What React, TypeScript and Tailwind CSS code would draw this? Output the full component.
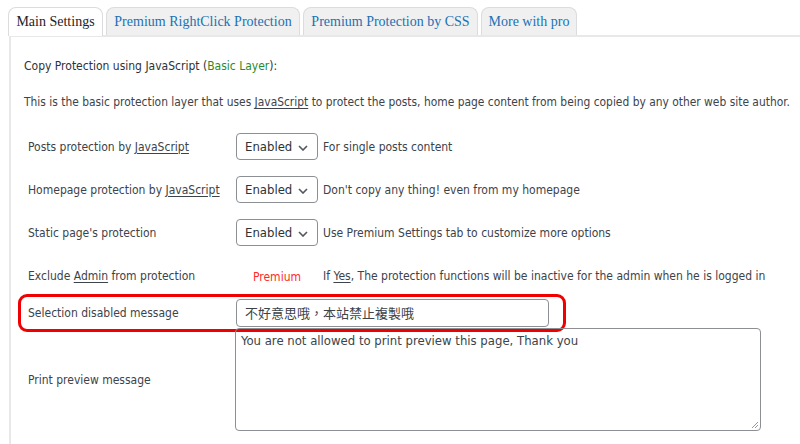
import React from "react";

const sans = { fontFamily: '"DejaVu Sans Condensed", "DejaVu Sans", sans-serif' };
const serif = { fontFamily: '"Liberation Serif", "DejaVu Serif", serif' };

function Chevron() {
  return (
    <svg width="10" height="6" viewBox="0 0 10 6" className="absolute right-[9px] top-[11px]">
      <path d="M1 1 L5 5 L9 1" fill="none" stroke="#50575e" strokeWidth="1.6" />
    </svg>
  );
}

function Select() {
  return (
    <div className="relative shrink-0 w-[82px] h-[27px] border border-[#8c8f94] rounded-[4px] bg-white text-[13px] text-[#2c3338] pl-[8px] leading-[25px]">
      Enabled
      <Chevron />
    </div>
  );
}

function U({ children }: { children: React.ReactNode }) {
  return <span className="underline underline-offset-2">{children}</span>;
}

export default function App() {
  return (
    <div className="w-[800px] h-[444px] bg-white overflow-hidden text-[#3c434a]" style={sans}>
      <div className="flex pl-[8px] pt-[7px] gap-[3px] items-end">
        <div className="w-[95px] h-[29px] text-center whitespace-nowrap border border-[#dcdcde] border-b-0 rounded-t-[8px] bg-white text-[14px] text-[#1d2327] leading-[27px] relative z-10 -mb-px" style={serif}>
          Main Settings
        </div>
        {[
          ["Premium RightClick Protection", "w-[194px]"],
          ["Premium Protection by CSS", "w-[175px]"],
          ["More with pro", "w-[96px]"],
        ].map(([t, w]) => (
          <div key={t} className={`${w} h-[28px] text-center whitespace-nowrap border border-[#dcdcde] border-b-0 rounded-t-[8px] bg-[#f0f0f1] text-[14px] text-[#2271b1] leading-[27px]`} style={serif}>
            {t}
          </div>
        ))}
      </div>
      <div className="ml-[9px] border-l-[2px] border-t-[2px] border-[#e8e8e8] h-[420px] pl-[13px] pt-[20px]">
        <div className="text-[12px] leading-[18px] text-[#2c3338]">
          Copy Protection using JavaScript (<span className="text-[#2a8a2a]">Basic Layer</span>):
        </div>
        <div className="text-[11.9px] leading-[18px] mt-[18px] whitespace-nowrap">
          This is the basic protection layer that uses <U>JavaScript</U> to protect the posts, home page content from being copied by any other web site author.
        </div>
        <div className="mt-[14px] flex flex-col text-[12px]">
          <div className="flex items-center h-[43px]">
            <div className="w-[212px] pl-[4px]">Posts protection by <U>JavaScript</U></div>
            <Select />
            <div className="ml-[5px]">For single posts content</div>
          </div>
          <div className="flex items-center h-[43px]">
            <div className="w-[212px] pl-[4px]">Homepage protection by <U>JavaScript</U></div>
            <Select />
            <div className="ml-[5px]">Don't copy any thing! even from my homepage</div>
          </div>
          <div className="flex items-center h-[43px]">
            <div className="w-[212px] pl-[4px]">Static page's protection</div>
            <Select />
            <div className="ml-[5px]">Use Premium Settings tab to customize more options</div>
          </div>
          <div className="flex items-center h-[41px] pt-[3px]">
            <div className="w-[212px] pl-[4px]">Exclude <U>Admin</U> from protection</div>
            <div className="w-[82px] text-center text-[#ff2a2a] pt-[2px]">Premium</div>
            <div className="ml-[5px] whitespace-nowrap">If <U>Yes</U>, The protection functions will be inactive for the admin when he is logged in</div>
          </div>
          <div className="relative flex items-center h-[35px]">
            <div className="absolute left-[-6px] top-[-1px] w-[548px] h-[38px] border-[3px] border-[#f00000] rounded-[9px] pointer-events-none" />
            <div className="w-[212px] pl-[4px]">Selection disabled message</div>
            <div className="w-[313px] h-[28px] border border-[#8c8f94] rounded-[4px] pl-[8px] leading-[26px] text-[13px] text-[#3c434a]" style={{ fontFamily: '"Noto Sans CJK TC", "Noto Sans CJK SC", sans-serif' }}>
              不好意思哦，本站禁止複製哦
            </div>
          </div>
          <div className="flex items-center h-[103px] -mt-[2px]">
            <div className="w-[211px] pl-[4px]">Print preview message</div>
            <div className="relative w-[526px] h-[103px] border border-[#8c8f94] rounded-[4px] pl-[5px] pt-[3px] leading-[18px] text-[13px]">
              You are not allowed to print preview this page, Thank you
              <svg width="8" height="8" viewBox="0 0 8 8" className="absolute right-[1px] bottom-[1px]">
                <path d="M7 1 L1 7 M7 4 L4 7" stroke="#999" strokeWidth="1" />
              </svg>
            </div>
          </div>
        </div>
      </div>
    </div>
  );
}
